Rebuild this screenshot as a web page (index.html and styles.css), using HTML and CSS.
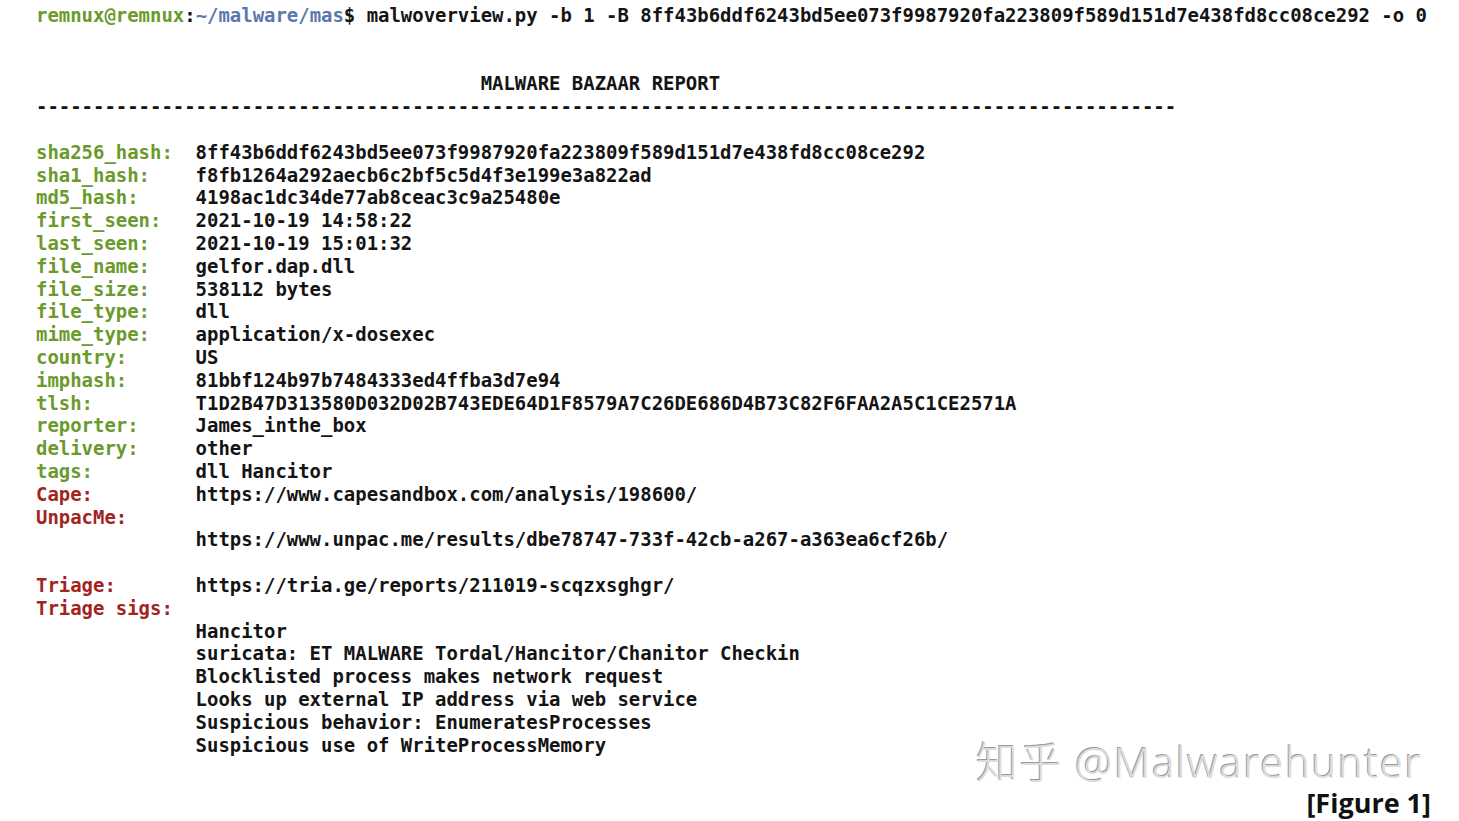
FILE: index.html
```html
<!DOCTYPE html>
<html>
<head>
<meta charset="utf-8">
<link rel="stylesheet" href="styles.css">
</head>
<body>
<div class="term">
  <div class="row"><span class="g">remnux@remnux</span>:<span class="b">~/malware/mas</span>$ malwoverview.py -b 1 -B 8ff43b6ddf6243bd5ee073f9987920fa223809f589d151d7e438fd8cc08ce292 -o 0</div>
  <div class="row"> </div>
  <div class="row"> </div>
  <div class="row title">MALWARE BAZAAR REPORT</div>
  <div class="row">----------------------------------------------------------------------------------------------------</div>
  <div class="row"> </div>
  <div class="row"><span class="lbl g">sha256_hash:</span>8ff43b6ddf6243bd5ee073f9987920fa223809f589d151d7e438fd8cc08ce292</div>
  <div class="row"><span class="lbl g">sha1_hash:</span>f8fb1264a292aecb6c2bf5c5d4f3e199e3a822ad</div>
  <div class="row"><span class="lbl g">md5_hash:</span>4198ac1dc34de77ab8ceac3c9a25480e</div>
  <div class="row"><span class="lbl g">first_seen:</span>2021-10-19 14:58:22</div>
  <div class="row"><span class="lbl g">last_seen:</span>2021-10-19 15:01:32</div>
  <div class="row"><span class="lbl g">file_name:</span>gelfor.dap.dll</div>
  <div class="row"><span class="lbl g">file_size:</span>538112 bytes</div>
  <div class="row"><span class="lbl g">file_type:</span>dll</div>
  <div class="row"><span class="lbl g">mime_type:</span>application/x-dosexec</div>
  <div class="row"><span class="lbl g">country:</span>US</div>
  <div class="row"><span class="lbl g">imphash:</span>81bbf124b97b7484333ed4ffba3d7e94</div>
  <div class="row"><span class="lbl g">tlsh:</span>T1D2B47D313580D032D02B743EDE64D1F8579A7C26DE686D4B73C82F6FAA2A5C1CE2571A</div>
  <div class="row"><span class="lbl g">reporter:</span>James_inthe_box</div>
  <div class="row"><span class="lbl g">delivery:</span>other</div>
  <div class="row"><span class="lbl g">tags:</span>dll Hancitor</div>
  <div class="row"><span class="lbl r">Cape:</span>https://www.capesandbox.com/analysis/198600/</div>
  <div class="row"><span class="lbl r">UnpacMe:</span></div>
  <div class="row"><span class="lbl"></span>https://www.unpac.me/results/dbe78747-733f-42cb-a267-a363ea6cf26b/</div>
  <div class="row"> </div>
  <div class="row"><span class="lbl r">Triage:</span>https://tria.ge/reports/211019-scqzxsghgr/</div>
  <div class="row"><span class="lbl r">Triage sigs:</span></div>
  <div class="row"><span class="lbl"></span>Hancitor</div>
  <div class="row"><span class="lbl"></span>suricata: ET MALWARE Tordal/Hancitor/Chanitor Checkin</div>
  <div class="row"><span class="lbl"></span>Blocklisted process makes network request</div>
  <div class="row"><span class="lbl"></span>Looks up external IP address via web service</div>
  <div class="row"><span class="lbl"></span>Suspicious behavior: EnumeratesProcesses</div>
  <div class="row"><span class="lbl"></span>Suspicious use of WriteProcessMemory</div>
</div>
<div class="watermark">知乎 @Malwarehunter</div>
<div class="figure">[Figure 1]</div>
</body>
</html>
```
FILE: styles.css
```css
html, body {
  margin: 0;
  padding: 0;
  background: #ffffff;
}
body {
  width: 1459px;
  height: 821px;
  position: relative;
  overflow: hidden;
}
.term {
  padding: 4px 0 0 36px;
  font-family: "DejaVu Sans Mono", "Liberation Mono", monospace;
  font-weight: bold;
  font-size: 18.96px;
  line-height: 22.81px;
  color: #141414;
}
.row {
  white-space: pre;
  height: 22.81px;
}
.title {
  padding-left: 39ch;
}
.lbl {
  display: inline-block;
  width: 14ch;
}
.g { color: #6b9a2c; }
.r { color: #a3231e; }
.b { color: #5a78ad; }
.watermark {
  position: absolute;
  left: 976px;
  top: 741px;
  font-family: "Noto Sans", "Noto Sans CJK SC", sans-serif;
  font-weight: 300;
  font-size: 42px;
  line-height: 42px;
  color: #dcdcdc;
  text-shadow: -1px -1px 0 #9a9a9a;
  letter-spacing: 1.4px;
}
.figure {
  position: absolute;
  right: 28px;
  top: 789px;
  font-family: "Open Sans", "Liberation Sans", sans-serif;
  font-weight: bold;
  font-size: 27px;
  line-height: 28px;
  color: #111111;
}
```
